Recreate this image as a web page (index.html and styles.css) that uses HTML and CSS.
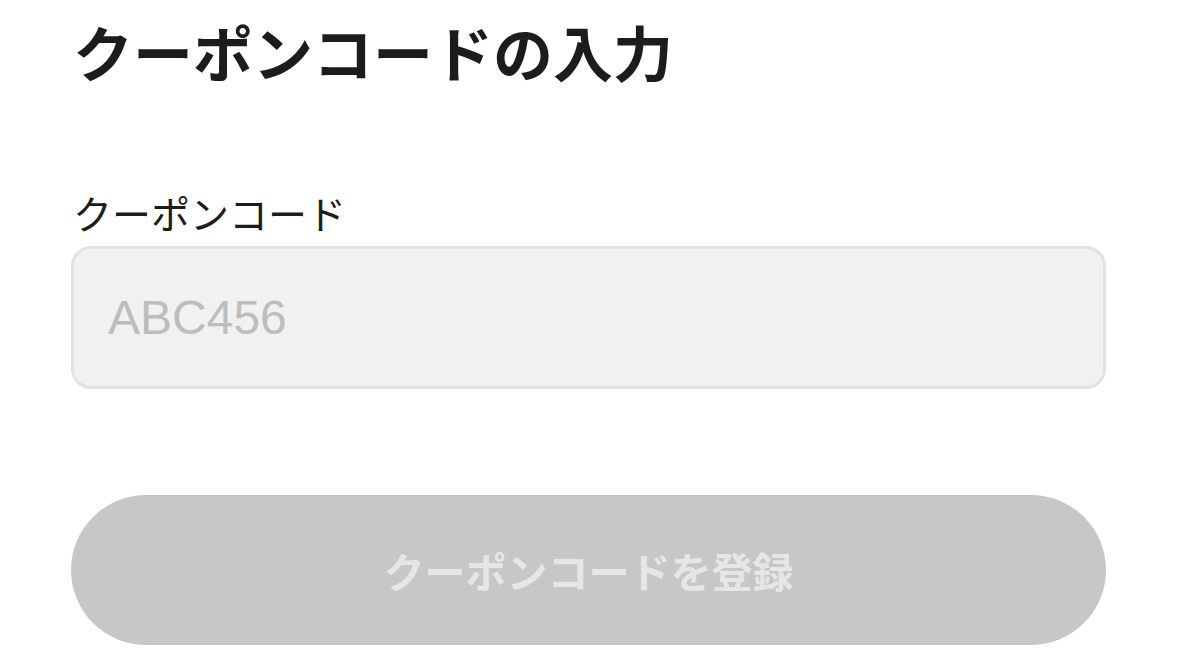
FILE: index.html
```html
<!DOCTYPE html>
<html lang="ja">
<head>
<meta charset="utf-8">
<link rel="stylesheet" href="styles.css">
</head>
<body>
<main class="page">
  <h1 class="title">クーポンコードの入力</h1>
  <label class="label" for="code">クーポンコード</label>
  <input class="field" id="code" type="text" placeholder="ABC456">
  <button class="submit" type="button" disabled>クーポンコードを登録</button>
</main>
</body>
</html>
```
FILE: styles.css
```css
html, body {
  margin: 0;
  padding: 0;
  background: #ffffff;
}
.page {
  display: flex;
  flex-direction: column;
  padding: 0 72px 0 71px;
  font-family: "Noto Sans CJK JP", "Noto Sans", sans-serif;
  color: #1c1c1c;
}
.title {
  margin: 11px 0 0 0;
  font-size: 60px;
  line-height: 80px;
  font-weight: 700;
  letter-spacing: 0;
  padding-left: 2px;
}
.label {
  margin-top: 98px;
  font-size: 39px;
  line-height: 46px;
  font-weight: 400;
  padding-left: 2px;
}
.field {
  margin-top: 11px;
  height: 143px;
  box-sizing: border-box;
  border: 3px solid #e2e2e2;
  border-radius: 20px;
  background: #f1f1f1;
  padding: 0 0 0 34px;
  font-family: "Liberation Sans", Arial, sans-serif;
  font-size: 48px;
  color: #333333;
  outline: none;
}
.field::placeholder {
  color: #bdbdbd;
}
.submit {
  margin-top: 106px;
  height: 150px;
  border: none;
  border-radius: 75px;
  background: #c7c7c7;
  color: #e6e6e6;
  font-family: "Noto Sans CJK JP", "Noto Sans", sans-serif;
  font-size: 41px;
  font-weight: 700;
  cursor: default;
}
```
